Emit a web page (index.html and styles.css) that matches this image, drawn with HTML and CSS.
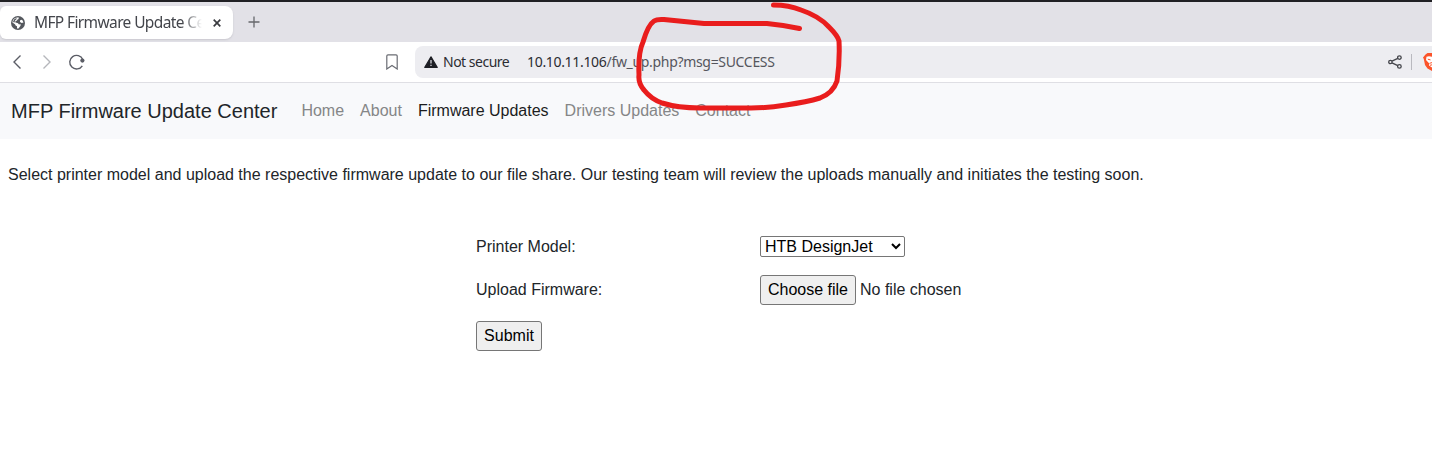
FILE: index.html
```html
<!DOCTYPE html>
<html lang="en">
<head>
<meta charset="utf-8">
<title>MFP Firmware Update Center</title>
<link rel="stylesheet" href="styles.css">
</head>
<body>
<div class="tabs">
  <div class="tab">
    <svg class="globe" width="14" height="14" viewBox="0 0 14 14"><circle cx="7" cy="7" r="7" fill="#55585e"/><path d="M7.6 1.3Q8.3 3.4 6.3 3.8 6 5.2 4.4 5.1L4.6 6.700Q7.500 6.300 7.700 8.300L10 8.600 9 10.500 7.500 12.600 6 12.500 6 10.300Q4.200 9.800 4 8.200L1.400 6.500Q1.500 3 5 1.700Z M9 4.500 10.200 3.700 11.500 4.300 12.500 6.500 10.700 6.900 9 6Z" fill="#fff"/><path d="M3 3.500 5 2.200 6 2.700 4 4.500 3.500 6.500 2 6Z" fill="#55585e"/></svg>
    <span class="tab-title">MFP Firmware Update Ce</span>
    <svg class="close" width="8" height="8" viewBox="0 0 8 8"><path d="m.7.7 6.6 6.6m0-6.600L.7 7.300" stroke="#3a3b40" stroke-width="1.7"/></svg>
  </div>
  <svg class="plus" width="12" height="12" viewBox="0 0 12 12"><path d="M6 .5v11M.5 6h11" stroke="#66676c" stroke-width="1.3"/></svg>
</div>
<div class="toolbar">
  <svg class="nav-icons" width="90" height="40" viewBox="0 0 90 40" fill="none" stroke-width="1.4">
    <path d="m20.500 13.500-6.500 6.500 6.500 6.500" stroke="#5b5d66"/>
    <path d="m43.500 13.500 6.500 6.500-6.500 6.500" stroke="#b5b6bb"/>
    <path d="M82.800 17.500A6.800 6.800 0 1 0 82.300 23.800" stroke="#5b5d66"/>
    <circle cx="82.400" cy="18.600" r="2.100" fill="#5b5d66"/>
  </svg>
  <svg class="bookmark" width="12" height="16" viewBox="0 0 12 16"><path d="M2 .8h8q1.200 0 1.200 1.200v13L6 11.500.8 15V2Q.8.8 2 .8Z" fill="none" stroke="#6a6c73" stroke-width="1.200"/></svg>
  <div class="address">
    <svg class="warn" width="14" height="12" viewBox="0 0 14 12"><path d="M7 .8 13.200 11.400H.8Z" fill="#1e1f25" stroke="#1e1f25" stroke-width="1.200" stroke-linejoin="round"/><path d="M7 4v3.600M7 8.700v1.400" stroke="#c8c8ce" stroke-width="1.400"/></svg>
    <span class="secure">Not secure</span>
    <span class="url">10.10.11.106<span class="path">/fw_up.php?msg=SUCCESS</span></span>
    <svg class="share" width="14" height="14" viewBox="0 0 14 14" fill="none" stroke="#44454b" stroke-width="1.300"><circle cx="2.400" cy="7" r="1.700"/><circle cx="11.400" cy="2.600" r="1.800"/><circle cx="11.400" cy="11.400" r="1.800"/><path d="m4 6.200 5.800-2.800M4 7.800l5.800 2.800"/></svg>
    <span class="divider"></span>
    <svg class="brave" width="9" height="20" viewBox="0 0 9 20"><path d="M4.500 1H9v18L4.500 16.500 2 13 .8 7 0 5.500 2.500 2.500Z" fill="#fb542b"/><path d="M3.500 4.800 6 4.200 9 4.800V15.500L6 13.500 6.300 11.500 3 8Z" fill="#fff"/><path d="m4.800 7.200 2.700.7M6.500 11.300 9 10.600M7 13.300 9 12.800" stroke="#fb542b" stroke-width="1"/></svg>
  </div>
</div>
<nav class="navbar">
  <a class="brand">MFP Firmware Update Center</a>
  <a class="link">Home</a><a class="link">About</a><a class="link active">Firmware Updates</a><a class="link">Drivers Updates</a><a class="link">Contact</a>
</nav>
<main>
  <p class="intro">Select printer model and upload the respective firmware update to our file share. Our testing team will review the uploads manually and initiates the testing soon.</p>
  <form class="form">
    <div class="row"><label class="label">Printer Model:</label><select class="select"><option>HTB DesignJet</option></select></div>
    <div class="row file-row"><label class="label">Upload Firmware:</label><button type="button" class="button">Choose file</button><span class="file-name">No file chosen</span></div>
    <div class="row submit-row"><button type="button" class="button submit">Submit</button></div>
  </form>
</main>
<svg class="marker" width="220" height="120" viewBox="630 0 220 120"><path d="M773.500 5Q789 5 801 10 819 16 829 27 838 36 839 41 840 61 837 81 833 93 820 98 807 102 786 105 767 108 751 108H700Q678 108 662 103 651 99 644 90 638 83 639 75 638 53 643 42 648 25 654 21 657 19 664 19.500L704 23.500H767Q783 25 799.500 28.500" fill="none" stroke="#e91d1d" stroke-width="5" stroke-linejoin="round" stroke-linecap="round"/></svg>
</body>
</html>
```
FILE: styles.css
```css
* { box-sizing: border-box; }
body { margin: 0; height: 465px; overflow: hidden; background: #fff; color: #212529; font: 16px/24px "Liberation Sans", Arial, sans-serif; }
svg { flex: none; }
.tabs { display: flex; align-items: center; height: 42px; background: #e2e1e7; border-top: 2px solid #202024; }
.tab { display: flex; align-items: center; width: 233px; height: 33px; margin-top: 1px; padding-left: 11px; background: #fff; border-radius: 6px 8px 8px 6px; box-shadow: 0 1px 2px #c9c8ce; }
.tab-title { width: 168px; margin-left: 9px; padding-bottom: 2px; white-space: nowrap; color: #43454b; font: 15.5px/22px "Noto Sans", sans-serif; letter-spacing: -.62px; -webkit-mask-image: linear-gradient(90deg, #000 148px, transparent 168px); mask-image: linear-gradient(90deg, #000 148px, transparent 168px); }
.close { margin-left: 11px; }
.plus { margin-left: 15px; }
.toolbar { display: flex; align-items: center; height: 41px; border-bottom: 1px solid #dfdfe4; background: #fff; font: 14px/20px "Noto Sans", sans-serif; }
.bookmark { margin-left: 296px; }
.address { display: flex; align-items: center; flex: 1; height: 32px; margin-left: 17px; padding-left: 9px; background: #ededf1; border-radius: 8px 0 0 8px; color: #2b2c32; white-space: nowrap; overflow: hidden; }
.secure { width: 84px; margin-left: 5px; letter-spacing: -.5px; }
.url { letter-spacing: -.32px; }
.path { color: #55565d; }
.share { margin-left: auto; }
.divider { width: 1px; height: 16px; margin: 0 11px 0 9px; background: #b9b9bf; }
.navbar { display: flex; align-items: center; height: 56px; padding-left: 11px; background: #f8f9fb; }
.brand { margin-right: 16px; font-size: 20px; line-height: 30px; }
.link { padding: 0 8px; color: #858687; }
.active { color: #1c1d1e; }
.intro { margin: 24px 0 0 8px; white-space: nowrap; }
.form { width: 568px; margin: 48px 0 0 476px; }
.row { display: flex; align-items: center; height: 24px; }
.label { width: 284px; }
.select { width: 145px; height: 21px; margin-bottom: 2px; padding: 0; border: 1px solid #767676; border-radius: 2px; background: #fff; color: #000; font: 16px "Liberation Sans", Arial, sans-serif; }
.file-row { height: 30px; margin-top: 16px; }
.submit-row { height: 30px; margin-top: 16px; }
.button { width: 96px; height: 30px; padding: 0; border: 1px solid #767676; border-radius: 3px; background: #efefef; color: #000; font: 16px "Liberation Sans", Arial, sans-serif; }
.submit { width: 66px; }
.file-name { margin-left: 4px; }
.marker { position: absolute; left: 630px; top: 0; }
```
